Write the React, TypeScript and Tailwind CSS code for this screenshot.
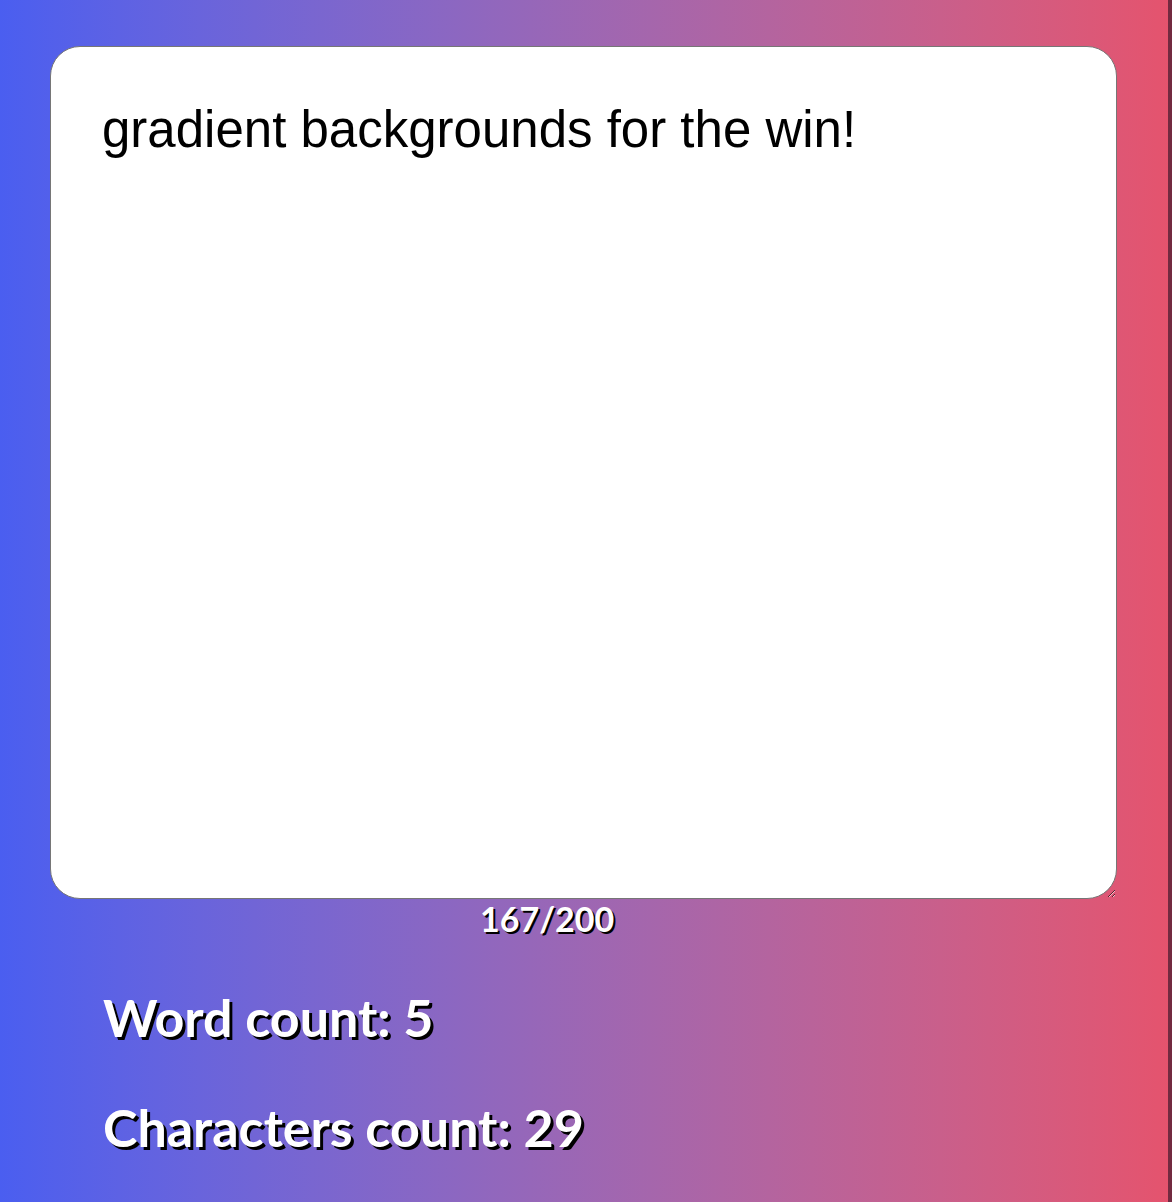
import { useState } from "react";

const App = () => {
  const [text, setText] = useState("gradient backgrounds for the win!");
  const max = 200;
  const words = text.trim() === "" ? 0 : text.trim().split(/\s+/).length;
  const chars = text.replace(/\s/g, "").length;

  return (
    <div className="flex min-h-[1202px] w-full bg-gradient-to-r from-[#4a5ef0] to-[#e5536d]">
      <div className="flex-1 flex flex-col pl-[50px] pt-[46px]">
        <textarea
          value={text}
          onChange={(e) => setText(e.target.value)}
          maxLength={max}
          className="w-[1067px] h-[853px] bg-white border border-[#767676] rounded-[30px] pt-[45px] pl-[51px] pr-[50px] text-[51px] text-black outline-none font-['Liberation_Sans',Arial,sans-serif]"
        />
        <p className="ml-[430px] text-white font-bold text-[34px] leading-[1.2] [text-shadow:2px_2px_0_#000] font-['Lato',sans-serif]">
          {max - text.length}/{max}
        </p>
        <h2 className="ml-[53px] mt-[46px] text-white font-bold text-[52px] leading-[1.2] [text-shadow:3px_3px_0_#000] font-['Lato',sans-serif]">
          Word count: {words}
        </h2>
        <h2 className="ml-[53px] mt-[48px] text-white font-bold text-[52px] leading-[1.2] [text-shadow:3px_3px_0_#000] font-['Lato',sans-serif]">
          Characters count: {chars}
        </h2>
      </div>
      <div className="w-[4px] bg-[#722a40]"></div>
    </div>
  );
};

export default App;
